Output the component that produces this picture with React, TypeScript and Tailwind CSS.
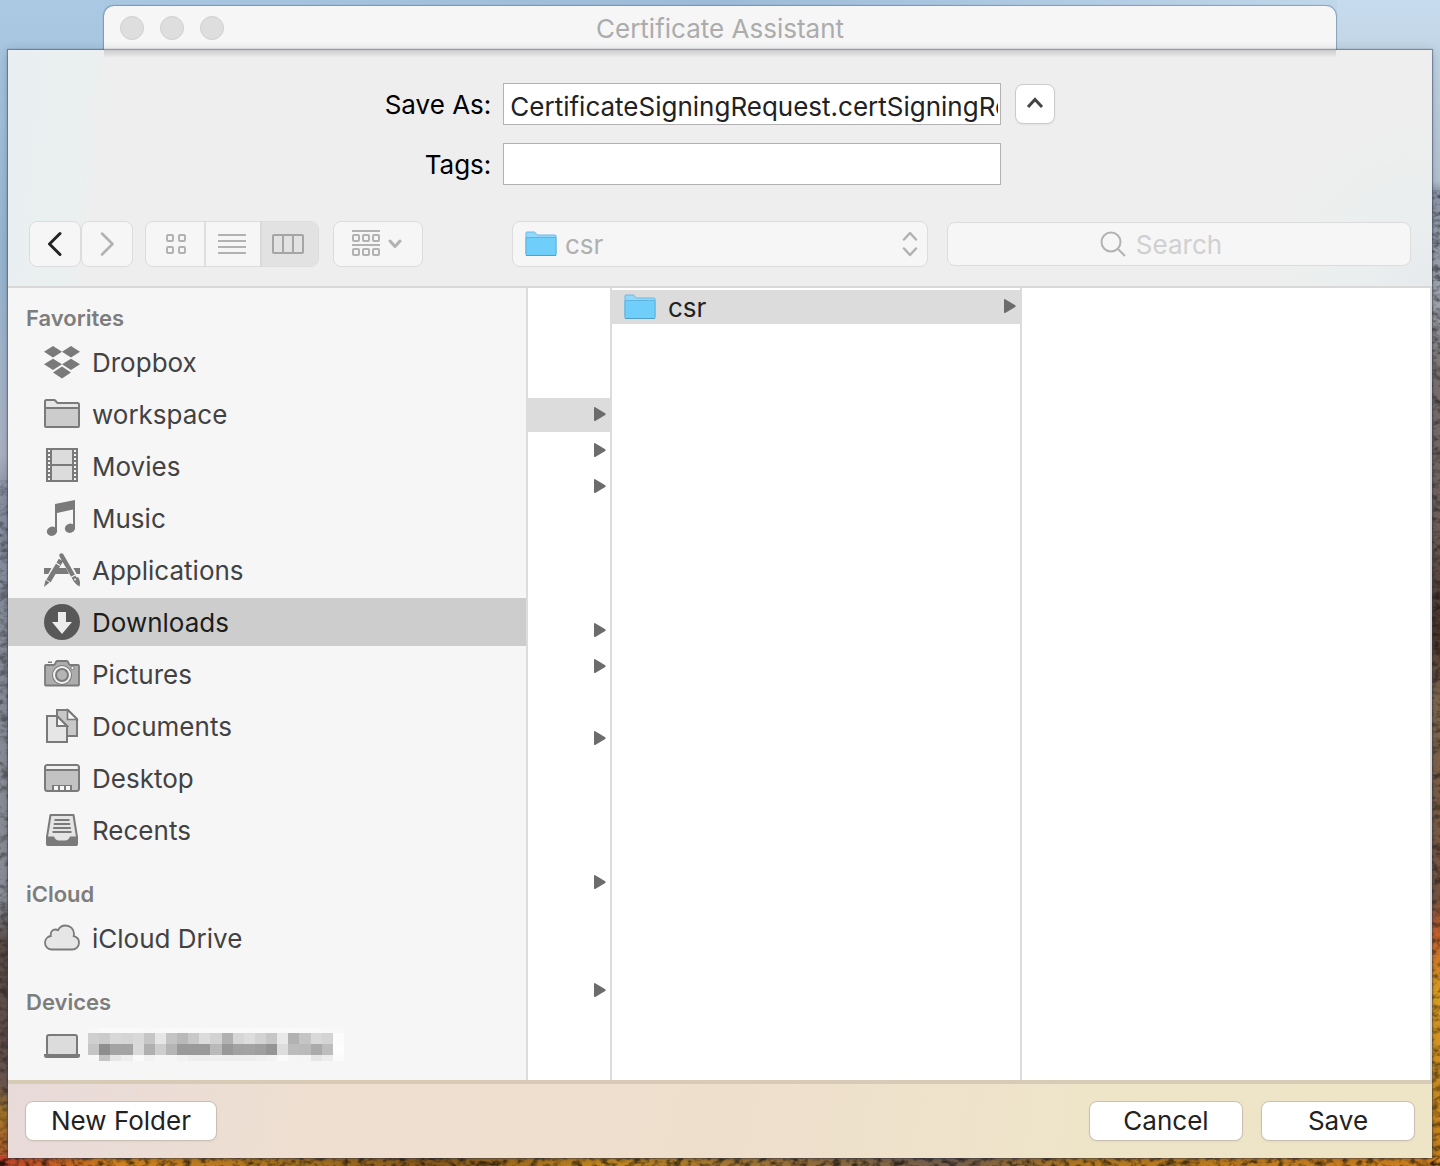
import React from "react";

type IconProps = { children: React.ReactNode };

function Icon36({ children }: IconProps) {
  return (
    <svg width="36" height="36" viewBox="0 0 36 36" fill="none" className="shrink-0" aria-hidden="true">
      {children}
    </svg>
  );
}

const GREY = "#7a7a7a";

const DropboxIcon = () => (
  <Icon36>
    <g fill={GREY}>
      <path d="M9 2l9 5.7-9 5.8-9-5.8z" />
      <path d="M27 2l9 5.7-9 5.8-9-5.8z" />
      <path d="M9 14.8l9 5.5-9 5.8-9-5.8z" />
      <path d="M27 14.8l9 5.5-9 5.8-9-5.8z" />
      <path d="M18 22.6l9 5.8-9 6-9-6z" />
    </g>
  </Icon36>
);

const FolderIcon = () => (
  <Icon36>
    <path d="M1 30V5.5Q1 4 2.500 4H10q1 0 1.600.8l1 1.400q.6.8 1.600.8H33.500q1.500 0 1.500 1.500V30q0 1-1 1H2q-1 0-1-1z" fill="#e6e6e6" />
    <path d="M1 12h34v19H1z" fill="#cccccc" />
    <path d="M1 30V5.500Q1 4 2.500 4H10q1 0 1.600.8l1 1.400q.6.8 1.600.8H33.500q1.500 0 1.500 1.500V30q0 1-1 1H2q-1 0-1-1zM1 12h34" stroke={GREY} strokeWidth="2" />
  </Icon36>
);

const MoviesIcon = () => (
  <Icon36>
    <rect x="2" y="0" width="32" height="34" fill={GREY} />
    <rect x="8" y="2" width="20" height="14" fill="#dcdcdc" />
    <rect x="8" y="18" width="20" height="14" fill="#dcdcdc" />
    {[2, 6, 10, 14, 18, 22, 26, 30].map((y) => (
      <g key={y} fill="#f6f6f6">
        <rect x="4" y={y} width="2" height="2" />
        <rect x="30" y={y} width="2" height="2" />
      </g>
    ))}
  </Icon36>
);

const MusicIcon = () => (
  <Icon36>
    <path d="M11 4L31 0v28h-2V9.500L13 13v18h-2z" fill={GREY} />
    <ellipse cx="8" cy="31.200" rx="5.200" ry="4.600" transform="rotate(-20 8 31.200)" fill={GREY} />
    <ellipse cx="26" cy="28.200" rx="5.200" ry="4.600" transform="rotate(-20 26 28.200)" fill={GREY} />
  </Icon36>
);

const ApplicationsIcon = () => (
  <Icon36>
    <path d="M0 16h36v6H0z" fill={GREY} />
    <path d="M17.500 6L4 31M18 4l14 25" stroke="#f6f6f6" strokeWidth="8" />
    <path d="M14 16h8l3 6H11z" fill={GREY} />
    <path d="M17 8L4.500 29" stroke={GREY} strokeWidth="5" />
    <path d="M17.500 3.500L31.500 28" stroke={GREY} strokeWidth="4.500" strokeLinecap="round" />
    <path d="M1.500 28l4 2.500L0 35z" fill={GREY} />
    <path d="M29 27.500l5-2.500c2 3 2.500 6 1.500 9.500-3-1.500-5-3.500-6.500-7z" fill={GREY} />
    <path d="M12 11l4 2.500M26 26l6-3.500" stroke="#f6f6f6" strokeWidth="1.200" />
    <circle cx="31" cy="27.500" r="1" fill="#f6f6f6" />
  </Icon36>
);

const DownloadsIcon = () => (
  <Icon36>
    <circle cx="18" cy="18" r="18" fill="#585858" />
    <path d="M14 8h8v10h6L18 30 8 18h6z" fill="#ececec" />
  </Icon36>
);

const PicturesIcon = () => (
  <Icon36>
    <path d="M4 5.500h4V7H4z" fill={GREY} />
    <path d="M1 10q0-1 1-1h7.500q1 0 1.500-1l1-2q.5-1 1.500-1h9q1 0 1.500 1l1 2q.5 1 1.500 1H34q1 0 1 1v18.500q0 1-1 1H2q-1 0-1-1z" fill="#adadad" stroke={GREY} strokeWidth="1.800" />
    <circle cx="18" cy="19" r="10" fill={GREY} />
    <circle cx="18" cy="19" r="9" fill="#f2f2f2" />
    <circle cx="18" cy="19" r="6" fill="#b4b4b4" stroke={GREY} strokeWidth="2" />
    <circle cx="28.500" cy="12" r="1.700" fill="#f2f2f2" stroke={GREY} strokeWidth="1" />
  </Icon36>
);

const DocumentsIcon = () => (
  <Icon36>
    <path d="M13 2h11l9 9v17H13z" fill="#c8c8c8" stroke={GREY} strokeWidth="2" />
    <path d="M23.500 2v9.500H33z" fill="#f6f6f6" stroke={GREY} strokeWidth="1.600" />
    <path d="M3 8h10l10 10v16H3z" fill="#e6e6e6" stroke={GREY} strokeWidth="2" />
    <path d="M13 8v10h10z" fill="#f6f6f6" stroke={GREY} strokeWidth="2" />
  </Icon36>
);

const DesktopIcon = () => (
  <Icon36>
    <rect x="1" y="5" width="34" height="26" rx="2.500" fill="#c2c2c2" stroke={GREY} strokeWidth="2" />
    <path d="M2.500 6h31v3h-31z" fill="#f0f0f0" />
    <path d="M1 10h34" stroke={GREY} strokeWidth="2" />
    <path d="M8 25h20v5H8z" fill={GREY} />
    <path d="M10 26h4v4h-4zM16 26h4v4h-4zM22 26h4v4h-4z" fill="#f6f6f6" />
  </Icon36>
);

const RecentsIcon = () => (
  <Icon36>
    <path d="M6.500 3h23l3.500 22v7q0 1-1 1H4q-1 0-1-1v-7z" fill="#e4e4e4" stroke={GREY} strokeWidth="2" strokeLinejoin="round" />
    <path d="M2.500 24.500H10q1.500 4 5 4h6q3.500 0 5-4h7.500V32q0 2-2 2h-27q-2 0-2-2z" fill={GREY} />
    <path d="M10.500 8h15M9.800 12h16.400M9.200 16h17.600M8.500 20h19" stroke={GREY} strokeWidth="1.800" />
  </Icon36>
);

const CloudIcon = () => (
  <Icon36>
    <path d="M8 29.500c-4 0-7-3-7-6.800 0-3.500 2.500-6.200 5.800-6.700C6 12 8.500 9.500 11.500 9.500c1 0 1.800.2 2.500.7C15.500 7.300 18.300 5.500 21.500 5.500c4.800 0 8.500 3.800 8.500 8.500 0 .8-.1 1.500-.3 2.200 3 .7 5.300 3.300 5.300 6.500 0 3.800-3 6.800-7 6.800z" fill="#e6e6e6" stroke={GREY} strokeWidth="1.800" />
  </Icon36>
);

const LaptopIcon = () => (
  <Icon36>
    <rect x="3" y="7" width="30" height="20" rx="2" fill="#dcdcdc" stroke={GREY} strokeWidth="2" />
    <path d="M0 26h36v1.500q0 2.500-2.500 2.500h-31Q0 30 0 27.500z" fill={GREY} />
  </Icon36>
);

const BlueFolder = () => (
  <svg width="32" height="26" viewBox="0 0 32 26" className="shrink-0" aria-hidden="true">
    <path d="M1 23V2q0-1 1-1h7q.8 0 1.300.6l1.400 1.800q.5.6 1.300.6H30q1 0 1 1v18z" fill="#93d8fc" stroke="#6bb9e2" strokeWidth="1" />
    <path d="M1 6.500h30V24q0 .5-.5.5h-29Q1 24.500 1 24z" fill="#70cefa" stroke="#5fb4de" strokeWidth="1" />
    <path d="M1 24.500h30" stroke="#4f9fc8" strokeWidth="1" />
  </svg>
);

const MOSAIC = [
  { y: 0, h: 5, c: "f8 fa fa fa f9 f8 f9 fa f9 fa f9 fa fa fa f9 fa fa f9 fa f9 f9 f8 f8" },
  { y: 5, h: 11, c: "cf cb d8 d5 d9 c6 e6 c4 b9 c9 dc d2 b1 d6 dd d3 c7 e9 b2 c5 d9 d4 fc" },
  { y: 16, h: 11, c: "c5 8e a3 a3 da b0 ce b5 9a 9a 9a b9 98 a2 a3 9f 95 dd bc ba aa bd fd" },
  { y: 27, h: 6, c: "f8 c4 e6 ee fa f2 f6 f6 f2 ee ee ef ee ee ee f0 f3 fa f6 f5 e6 ec fb" },
];

function Mosaic() {
  return (
    <svg width="256" height="33" viewBox="0 0 253 33" preserveAspectRatio="none" shapeRendering="crispEdges" aria-hidden="true">
      {MOSAIC.map((row) =>
        row.c.split(" ").map((v, i) => (
          <rect key={row.y + "-" + i} x={i * 11} y={row.y} width="11" height={row.h} fill={"#" + v + v + v} />
        ))
      )}
    </svg>
  );
}

type Item = { label: string; icon: React.ReactNode; selected?: boolean };

const GROUPS: { title: string; items: Item[] }[] = [
  {
    title: "Favorites",
    items: [
      { label: "Dropbox", icon: <DropboxIcon /> },
      { label: "workspace", icon: <FolderIcon /> },
      { label: "Movies", icon: <MoviesIcon /> },
      { label: "Music", icon: <MusicIcon /> },
      { label: "Applications", icon: <ApplicationsIcon /> },
      { label: "Downloads", icon: <DownloadsIcon />, selected: true },
      { label: "Pictures", icon: <PicturesIcon /> },
      { label: "Documents", icon: <DocumentsIcon /> },
      { label: "Desktop", icon: <DesktopIcon /> },
      { label: "Recents", icon: <RecentsIcon /> },
    ],
  },
  { title: "iCloud", items: [{ label: "iCloud Drive", icon: <CloudIcon /> }] },
  { title: "Devices", items: [{ label: "", icon: <LaptopIcon /> }] },
];

function Sidebar() {
  return (
    <nav className="flex w-[520px] shrink-0 flex-col gap-6 border-r-2 border-[#dcdcdc] bg-[#f6f6f6] pt-3.5">
      {GROUPS.map((g) => (
        <section key={g.title}>
          <h2 className="h-8 pl-[18px] text-[22px] leading-8 font-semibold text-[#7d7d7d]">{g.title}</h2>
          <ul className="flex flex-col gap-1 pt-1">
            {g.items.map((it) => (
              <li key={it.label}>
                <button
                  type="button"
                  aria-label={it.label || "Computer"}
                  className={
                    it.selected
                      ? "flex h-12 w-full items-center gap-3 bg-[#cdcdcd] pl-9 text-left text-[#1c1c1c]"
                      : "flex h-12 w-full items-center gap-3 pl-9 text-left text-[#424242]"
                  }
                >
                  {it.icon}
                  {it.label ? <span className="pt-0.5">{it.label}</span> : <span className="-ml-1 pb-1"><Mosaic /></span>}
                </button>
              </li>
            ))}
          </ul>
        </section>
      ))}
    </nav>
  );
}

const Arrow = () => (
  <svg width="13" height="16" viewBox="0 0 13 16" aria-hidden="true">
    <path d="M1 1v12q0 1.500 1.200.9l10-5.900q1-1 0-1.800L2.200.3Q1-.3 1 1z" fill="#6c6c6c" />
  </svg>
);

const ARROW_ROWS = [3, 4, 5, 9, 10, 12, 16, 19];

function Browser() {
  return (
    <div className="flex min-w-0 flex-1 border-r-2 border-[#dcdcdc] bg-white">
      <ul className="flex w-[84px] shrink-0 flex-col gap-0.5 border-r-2 border-[#dcdcdc] pt-0.5">
        {Array.from({ length: 21 }, (_, i) => (
          <li
            key={i}
            className={
              i === 3
                ? "flex h-[34px] items-center justify-end bg-[#dcdcdc] pr-1"
                : "flex h-[34px] items-center justify-end pr-1"
            }
          >
            {ARROW_ROWS.includes(i) && <Arrow />}
          </li>
        ))}
      </ul>
      <ul className="flex-1 border-r-2 border-[#dcdcdc] pt-0.5">
        <li className="flex h-[34px] items-center bg-[#dcdcdc] pr-1 pl-3 text-[#222]">
          <BlueFolder />
          <span className="flex-1 pt-0.5 pl-3">csr</span>
          <Arrow />
        </li>
      </ul>
      <div className="flex-1" />
    </div>
  );
}

function Toolbar() {
  return (
    <div className="flex items-center px-[21px]">
      <div className="flex h-[46px]">
        <button type="button" aria-label="Back" className="flex w-[52px] items-center justify-center rounded-lg border border-[#dcdcdc] bg-[#f6f6f6]">
          <svg width="16" height="26" viewBox="0 0 16 26" fill="none"><path d="M13 2.500L2.500 13 13 23.500" stroke="#222" strokeWidth="3" strokeLinecap="round" strokeLinejoin="round" /></svg>
        </button>
        <button type="button" aria-label="Forward" className="flex w-[52px] items-center justify-center rounded-lg border border-[#dcdcdc] bg-[#f6f6f6]">
          <svg width="16" height="26" viewBox="0 0 16 26" fill="none"><path d="M3 2.500L13.500 13 3 23.500" stroke="#b2b2b2" strokeWidth="2.500" strokeLinecap="round" strokeLinejoin="round" /></svg>
        </button>
      </div>
      <div className="ml-3 flex h-[46px] overflow-hidden rounded-lg border border-[#dcdcdc] bg-[#f6f6f6]">
        <button type="button" aria-label="Icon view" className="flex w-[60px] items-center justify-center border-r-2 border-[#dedede] pl-0.5">
          <svg width="22" height="22" viewBox="0 0 22 22" fill="none" stroke="#b2b2b2" strokeWidth="2">
            <rect x="2" y="2" width="6" height="6" rx="1" /><rect x="14" y="2" width="6" height="6" rx="1" />
            <rect x="2" y="14" width="6" height="6" rx="1" /><rect x="14" y="14" width="6" height="6" rx="1" />
          </svg>
        </button>
        <button type="button" aria-label="List view" className="flex w-[54px] items-center justify-center pr-0.5">
          <svg width="28" height="20" viewBox="0 0 28 20" fill="none" stroke="#b2b2b2" strokeWidth="2"><path d="M0 1h28M0 7h28M0 13h28M0 19h28" /></svg>
        </button>
        <button type="button" aria-label="Column view" className="flex w-[58px] items-center justify-center border-l-2 border-[#dadada] bg-[#e2e2e2] pr-1">
          <svg width="32" height="20" viewBox="0 0 32 20" fill="none" stroke="#a5a5a5" strokeWidth="2"><rect x="1" y="1" width="30" height="18" rx="1" /><path d="M11 1v18M21 1v18" /></svg>
        </button>
      </div>
      <button type="button" aria-label="Group items" className="ml-3.5 flex h-[46px] w-[90px] items-center justify-center gap-2 rounded-lg border border-[#dcdcdc] bg-[#f6f6f6] pr-0.5">
        <svg width="28" height="28" viewBox="0 0 28 28" fill="none" stroke="#b2b2b2" strokeWidth="2">
          <path d="M0 1h28M0 15h28" />
          <rect x="1" y="5" width="6" height="6" rx="1" /><rect x="11" y="5" width="6" height="6" rx="1" /><rect x="21" y="5" width="6" height="6" rx="1" />
          <rect x="1" y="19" width="6" height="6" rx="1" /><rect x="11" y="19" width="6" height="6" rx="1" /><rect x="21" y="19" width="6" height="6" rx="1" />
        </svg>
        <svg width="14" height="10" viewBox="0 0 14 10" fill="none"><path d="M2 2l5 5.500L12 2" stroke="#b2b2b2" strokeWidth="3" strokeLinecap="round" strokeLinejoin="round" /></svg>
      </button>
      <div className="relative ml-[89px] h-[46px] w-[416px]">
        <select disabled aria-label="Folder" className="h-full w-full appearance-none rounded-lg border border-[#dcdcdc] bg-[#f6f6f6] pt-0.5 pl-[52px] text-[#b0b0b0] opacity-100">
          <option>csr</option>
        </select>
        <div className="pointer-events-none absolute inset-0 flex items-center justify-between pr-2.5 pl-[13px]">
          <BlueFolder />
          <svg width="16" height="28" viewBox="0 0 16 28" fill="none" stroke="#b2b2b2" strokeWidth="2.500" strokeLinecap="round" strokeLinejoin="round"><path d="M2 9.500L8 3l6 6.500M2 18.500L8 25l6-6.500" /></svg>
        </div>
      </div>
      <label className="ml-[19px] flex h-11 flex-1 items-center justify-center gap-2.5 rounded-lg border border-[#dcdcdc] bg-[#f6f6f6] pr-9">
        <svg width="26" height="26" viewBox="0 0 26 26" fill="none" stroke="#b2b2b2" strokeWidth="2"><circle cx="11" cy="11" r="9.500" /><path d="M17.500 17.500L25 25" /></svg>
        <input aria-label="Search" placeholder="Search" className="field-sizing-content bg-transparent pt-0.5 outline-none placeholder:text-[#d0d0d0]" />
      </label>
    </div>
  );
}

function SaveForm() {
  const field = "h-[42px] border border-[#b2b2b2] bg-white pt-1 pr-0.5 pl-1.5 text-[#222] outline-none";
  return (
    <div className="grid grid-cols-[auto_498px_54px] items-center justify-center gap-y-[18px]">
      <label htmlFor="save-as" className="pt-0.5 pr-3 text-right">Save As:</label>
      <input id="save-as" className={field} defaultValue="CertificateSigningRequest.certSigningRequest" />
      <button type="button" aria-label="Collapse" className="ml-3.5 flex h-10 w-10 items-center justify-center rounded-lg border border-[#cbcbcb] bg-white pb-0.5 shadow-xs">
        <svg width="18" height="12" viewBox="0 0 18 12" fill="none"><path d="M2 10l7-7.500L16 10" stroke="#444" strokeWidth="3" /></svg>
      </button>
      <label htmlFor="tags" className="pt-0.5 pr-3 text-right">Tags:</label>
      <input id="tags" className={field} />
    </div>
  );
}

function Wallpaper() {
  return (
    <svg className="absolute inset-0 -z-10 h-full w-full" preserveAspectRatio="none" viewBox="0 0 1440 1166" aria-hidden="true">
      <defs>
        <linearGradient id="wl" x1="0" y1="0" x2="0" y2="1">
          <stop offset="0" stopColor="#abc9e2" /><stop offset=".22" stopColor="#98b6d2" /><stop offset=".39" stopColor="#adb3c4" />
          <stop offset=".43" stopColor="#8890a2" /><stop offset=".6" stopColor="#8a8d98" /><stop offset=".77" stopColor="#8d8f99" />
          <stop offset=".81" stopColor="#5b4b45" /><stop offset=".93" stopColor="#6d5650" /><stop offset=".955" stopColor="#a97a2c" /><stop offset="1" stopColor="#b95a2c" />
        </linearGradient>
        <linearGradient id="wr" x1="0" y1="0" x2="0" y2="1">
          <stop offset="0" stopColor="#c6dcee" /><stop offset=".155" stopColor="#b6c3d2" /><stop offset=".165" stopColor="#8f97a8" />
          <stop offset=".26" stopColor="#a5a8b0" /><stop offset=".32" stopColor="#7c7271" /><stop offset=".45" stopColor="#70605a" />
          <stop offset=".54" stopColor="#4b352a" /><stop offset=".6" stopColor="#82684f" /><stop offset=".77" stopColor="#765440" />
          <stop offset=".8" stopColor="#c9602a" /><stop offset=".85" stopColor="#e0a020" /><stop offset="1" stopColor="#c8801c" />
        </linearGradient>
        <linearGradient id="wt" x1="0" y1="0" x2="1" y2="0">
          <stop offset="0" stopColor="#abc9e2" /><stop offset=".5" stopColor="#9dbbd8" /><stop offset="1" stopColor="#c6dcee" />
        </linearGradient>
        <linearGradient id="wb" x1="0" y1="0" x2="1" y2="0">
          <stop offset="0" stopColor="#c4452a" /><stop offset=".08" stopColor="#d8861d" /><stop offset=".2" stopColor="#b07820" />
          <stop offset=".3" stopColor="#8a5a1c" /><stop offset=".42" stopColor="#c88a20" /><stop offset=".66" stopColor="#77604e" />
          <stop offset=".75" stopColor="#b87c20" /><stop offset="1" stopColor="#d8841c" />
        </linearGradient>
        <filter id="grain" x="0" y="0" width="1" height="1">
          <feTurbulence type="fractalNoise" baseFrequency=".12 .18" numOctaves="4" seed="4" />
          <feColorMatrix values="0 0 0 0 0  0 0 0 0 0  0 0 0 0 0  3 0 0 0 -1.300" />
        </filter>
      </defs>
      <rect width="1440" height="60" fill="url(#wt)" />
      <rect width="105" height="1166" fill="url(#wl)" />
      <rect x="1337" width="103" height="1166" fill="url(#wr)" />
      <rect y="1156" width="1440" height="10" fill="url(#wb)" />
      <rect y="480" width="10" height="686" filter="url(#grain)" opacity=".35" />
      <rect x="1430" y="190" width="10" height="976" filter="url(#grain)" opacity=".45" />
      <rect y="1156" width="1440" height="10" filter="url(#grain)" opacity=".6" />
    </svg>
  );
}

export default function App() {
  return (
    <main className="relative isolate flex min-h-screen flex-col px-2 pt-1.5 pb-2 font-['Inter',sans-serif] text-[26px] leading-8 text-black">
      <Wallpaper />
      <header className="mx-24 flex h-11 items-center rounded-t-[10px] bg-[#f6f6f6] px-4 shadow-[0_0_1px_1px_rgba(60,80,110,0.4)]">
        <div className="flex flex-1 gap-4">
          {["Close", "Minimize", "Zoom"].map((n) => (
            <button key={n} type="button" aria-label={n} className="h-6 w-6 rounded-full border border-[#d0d0d0] bg-[#dedede]" />
          ))}
        </div>
        <h1 className="pt-0.5 text-[#acacac]">Certificate Assistant</h1>
        <div className="flex-1" />
      </header>
      <div className="relative flex flex-1 flex-col bg-[#eeeeee] shadow-[0_0_1px_1px_rgba(50,60,80,0.45),0_2px_10px_rgba(20,30,50,0.25)]">
        <div className="flex h-[238px] flex-col justify-between border-b-2 border-[#d8d8d8] bg-[radial-gradient(circle_at_100%_100%,#e6eaec_0%,#eaeeef_70px,transparent_160px),linear-gradient(96deg,#e9eff1_0%,#ebeff0_6%,#eeeeee_7%)] pt-[33px] pb-[19px]">
          <SaveForm />
          <Toolbar />
        </div>
        <div className="pointer-events-none absolute inset-x-24 top-0 h-2 bg-linear-to-b from-black/15 to-transparent" />
        <div className="flex flex-1">
          <Sidebar />
          <Browser />
        </div>
        <footer className="flex items-center gap-[18px] border-t-4 border-[#d8cbb6] bg-[linear-gradient(100deg,#e8dad9_0%,#eedfd2_20%,#eedfcd_50%,#eee5c9_75%,#eee5c7_100%)] p-[17px]">
          <button type="button" className="mr-auto h-10 w-48 rounded-lg border border-[#cabfb2] bg-white text-[#222] shadow-xs">New Folder</button>
          <button type="button" className="h-10 w-[154px] rounded-lg border border-[#cabfb2] bg-white text-[#222] shadow-xs">Cancel</button>
          <button type="button" className="h-10 w-[154px] rounded-lg border border-[#cabfb2] bg-white text-[#222] shadow-xs">Save</button>
        </footer>
      </div>
    </main>
  );
}
